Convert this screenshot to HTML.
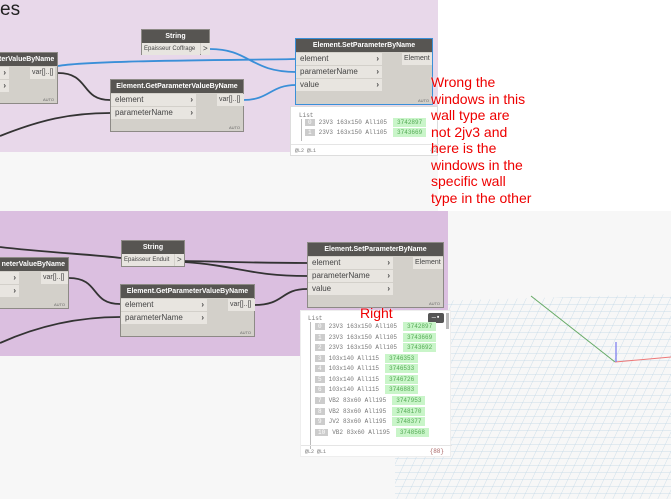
<!DOCTYPE html>
<html><head><meta charset="utf-8"><style>
body{margin:0;width:671px;height:499px;overflow:hidden;background:#f7f7f7;position:relative;font-family:"Liberation Sans",sans-serif}
.a{position:absolute}
.node{position:absolute;background:#d3d0ca;border:1px solid #8d8a86;box-sizing:border-box}
.hd{background:#575552;color:#fff;font-size:7px;font-weight:bold;text-align:center;height:13px;line-height:13px;white-space:nowrap;overflow:hidden}
.row{position:absolute;background:#e8e5e0;font-size:8px;color:#444;height:12px;line-height:12px;padding-left:4px;box-sizing:border-box;white-space:nowrap;overflow:hidden}
.row b{position:absolute;right:3px;top:0;font-weight:bold}
.auto{position:absolute;right:3px;bottom:1px;font-size:4px;color:#666}
.red{color:#e00;font-size:14px;line-height:16.5px;text-shadow:0 0 2px #fff}
.w{position:absolute;background:#fff;border:1px solid #ddd;box-sizing:border-box;font-family:"Liberation Mono",monospace;font-size:6px;color:#777}
.w .i{position:absolute;left:14px;white-space:nowrap}
.w .i s{text-decoration:none;background:#ccc;color:#fff;padding:0 3px;margin-right:4px}
.w .i u{text-decoration:none;background:#c9f5c9;color:#5a5;padding:1px 4px;margin-left:6px}
</style></head><body>
<div class="a" style="left:438px;top:0;width:233px;height:211px;background:#fff"></div>
<div class="a" style="left:0;top:0;width:438px;height:152px;background:#e8d8ea"></div>
<div class="a" style="left:0;top:211px;width:448px;height:145px;background:#dbbfe0"></div>
<svg class="a" style="left:395px;top:290px" width="276" height="209">
<defs><pattern id="g" width="9" height="7" patternUnits="userSpaceOnUse" patternTransform="skewX(-25)"><path d="M0 0H9M0 0V7" stroke="#b9d3e4" stroke-width="0.7" fill="none"/></pattern></defs>
<polygon points="0,12 276,4 276,209 0,209" fill="url(#g)"/>
<line x1="136" y1="6" x2="220" y2="72" stroke="#6a6" stroke-width="1"/>
<line x1="220" y1="72" x2="276" y2="67" stroke="#e77" stroke-width="1"/>
<line x1="221" y1="52" x2="221" y2="72" stroke="#77e" stroke-width="1.2"/>
</svg>
<div class="a" style="left:0;top:-1px;font-size:19px;color:#222">es</div>
<svg class="a" style="left:0;top:0" width="671" height="499">
<g fill="none" stroke-width="1.8">
<path d="M58 66 C90 60 260 60 296 59" stroke="#3a8fd8"/>
<path d="M210 49 C250 49 250 72 296 72" stroke="#3a8fd8"/>
<path d="M243 100 C270 100 270 85 296 85" stroke="#3a8fd8"/>
<path d="M58 73 C90 73 80 100 110 100" stroke="#333"/>
<path d="M0 136 C40 120 70 113 110 113" stroke="#333"/>
<path d="M0 247 C40 252 100 255 121 258" stroke="#333"/>
<path d="M184 261 C240 262 260 263 307 263" stroke="#333"/>
<path d="M184 262 C240 266 250 276 307 276" stroke="#333"/>
<path d="M69 278 C100 278 90 304 120 304" stroke="#333"/>
<path d="M0 343 C40 325 80 317 120 317" stroke="#333"/>
<path d="M254 305 C285 305 280 289 307 289" stroke="#333"/>
</g></svg>
<!-- top nodes -->
<div class="node" style="left:-2px;top:52px;width:60px;height:52px"><div class="hd" style="text-align:right;padding-right:3px">terValueByName</div>
<div class="row" style="left:0;top:14px;width:10px"><b>›</b></div><div class="row" style="left:0;top:27px;width:10px"><b>›</b></div>
<div class="row" style="left:31px;top:14px;width:25px;padding-left:2px;font-size:7px">var[]..[]</div><div class="auto">AUTO</div></div>
<div class="node" style="left:141px;top:29px;width:69px;height:26px"><div class="hd">String</div>
<div class="row" style="left:0;top:13px;width:58px;font-size:6px;padding-left:2px">Epaisseur Coffrage</div><div class="row" style="left:59px;top:13px;width:9px;padding-left:2px">&gt;</div></div>
<div class="node" style="left:110px;top:79px;width:134px;height:53px"><div class="hd">Element.GetParameterValueByName</div>
<div class="row" style="left:0;top:14px;width:85px">element<b>›</b></div><div class="row" style="left:0;top:27px;width:85px">parameterName<b>›</b></div>
<div class="row" style="left:106px;top:14px;width:27px;padding-left:2px;font-size:7px">var[]..[]</div><div class="auto">AUTO</div></div>
<div class="node" style="left:295px;top:38px;width:138px;height:67px;border:1px solid #3a8fd8"><div class="hd">Element.SetParameterByName</div>
<div class="row" style="left:0;top:14px;width:86px">element<b>›</b></div><div class="row" style="left:0;top:27px;width:86px">parameterName<b>›</b></div><div class="row" style="left:0;top:40px;width:86px">value<b>›</b></div>
<div class="row" style="left:106px;top:14px;width:30px;padding-left:2px;font-size:7px">Element</div><div class="auto">AUTO</div></div>
<div class="w" style="left:290px;top:106px;width:148px;height:50px">
<div class="a" style="left:8px;top:5px">List</div><div class="a" style="left:10px;top:12px;width:1px;height:22px;background:#bbb"></div>
<div class="i" style="top:12px"><s>0</s>23V3 163x150 All105<u>3742897</u></div>
<div class="i" style="top:22px"><s>1</s>23V3 163x150 All105<u>3743669</u></div>
<div class="a" style="left:0;top:37px;width:148px;height:1px;background:#e5e5e5"></div>
<div class="a" style="left:4px;top:41px;font-size:5px">@L2 @L1</div><div class="a" style="right:0;top:40px">{2</div></div>
<div class="a red" style="left:431px;top:74px;white-space:nowrap">Wrong the<br>windows in this<br>wall type are<br>not 2jv3 and<br>here is the<br>windows in the<br>specific wall<br>type in the other</div>
<!-- bottom nodes -->
<div class="node" style="left:-2px;top:257px;width:71px;height:52px"><div class="hd" style="text-align:right;padding-right:3px">neterValueByName</div>
<div class="row" style="left:0;top:14px;width:20px"><b>›</b></div><div class="row" style="left:0;top:27px;width:20px"><b>›</b></div>
<div class="row" style="left:42px;top:14px;width:27px;padding-left:2px;font-size:7px">var[]..[]</div><div class="auto">AUTO</div></div>
<div class="node" style="left:121px;top:240px;width:64px;height:27px"><div class="hd">String</div>
<div class="row" style="left:0;top:13px;width:52px;font-size:6px;padding-left:2px">Epaisseur Enduit</div><div class="row" style="left:53px;top:13px;width:9px;padding-left:2px">&gt;</div></div>
<div class="node" style="left:120px;top:284px;width:135px;height:53px"><div class="hd">Element.GetParameterValueByName</div>
<div class="row" style="left:0;top:14px;width:86px">element<b>›</b></div><div class="row" style="left:0;top:27px;width:86px">parameterName<b>›</b></div>
<div class="row" style="left:107px;top:14px;width:27px;padding-left:2px;font-size:7px">var[]..[]</div><div class="auto">AUTO</div></div>
<div class="node" style="left:307px;top:242px;width:137px;height:66px"><div class="hd">Element.SetParameterByName</div>
<div class="row" style="left:0;top:14px;width:85px">element<b>›</b></div><div class="row" style="left:0;top:27px;width:85px">parameterName<b>›</b></div><div class="row" style="left:0;top:40px;width:85px">value<b>›</b></div>
<div class="row" style="left:105px;top:14px;width:30px;padding-left:2px;font-size:7px">Element</div><div class="auto">AUTO</div></div>
<div class="w" style="left:300px;top:310px;width:151px;height:147px;border-color:#eee">
<div class="a" style="left:7px;top:4px">List</div><div class="a" style="left:9px;top:11px;width:1px;height:127px;background:#bbb"></div>
<div class="a" style="left:127px;top:2px;width:16px;height:10px;background:#555;border-radius:2px;color:#fff;font-size:7px;text-align:center;line-height:10px">—▪</div>
<div class="a" style="left:145px;top:2px;width:3px;height:16px;background:#bbb"></div>
<div class="i" style="top:12px"><s>0</s>23V3 163x150 All105<u>3742897</u></div>
<div class="i" style="top:23px"><s>1</s>23V3 163x150 All105<u>3743669</u></div>
<div class="i" style="top:33px"><s>2</s>23V3 163x150 All105<u>3743692</u></div>
<div class="i" style="top:44px"><s>3</s>103x140 All115<u>3746353</u></div>
<div class="i" style="top:54px"><s>4</s>103x140 All115<u>3746533</u></div>
<div class="i" style="top:65px"><s>5</s>103x140 All115<u>3746726</u></div>
<div class="i" style="top:75px"><s>6</s>103x140 All115<u>3746883</u></div>
<div class="i" style="top:86px"><s>7</s>VB2 83x60 All195<u>3747953</u></div>
<div class="i" style="top:97px"><s>8</s>VB2 83x60 All195<u>3748170</u></div>
<div class="i" style="top:107px"><s>9</s>JV2 83x60 All195<u>3748377</u></div>
<div class="i" style="top:118px"><s>10</s>VB2 83x60 All195<u>3748568</u></div>
<div class="a" style="left:0;top:134px;width:151px;height:1px;background:#e5e5e5"></div>
<div class="a" style="left:4px;top:138px;font-size:5px">@L2 @L1</div><div class="a" style="right:6px;top:137px;color:#a66">{88}</div></div>
<div class="a red" style="left:360px;top:305px">Right</div>
</body></html>
